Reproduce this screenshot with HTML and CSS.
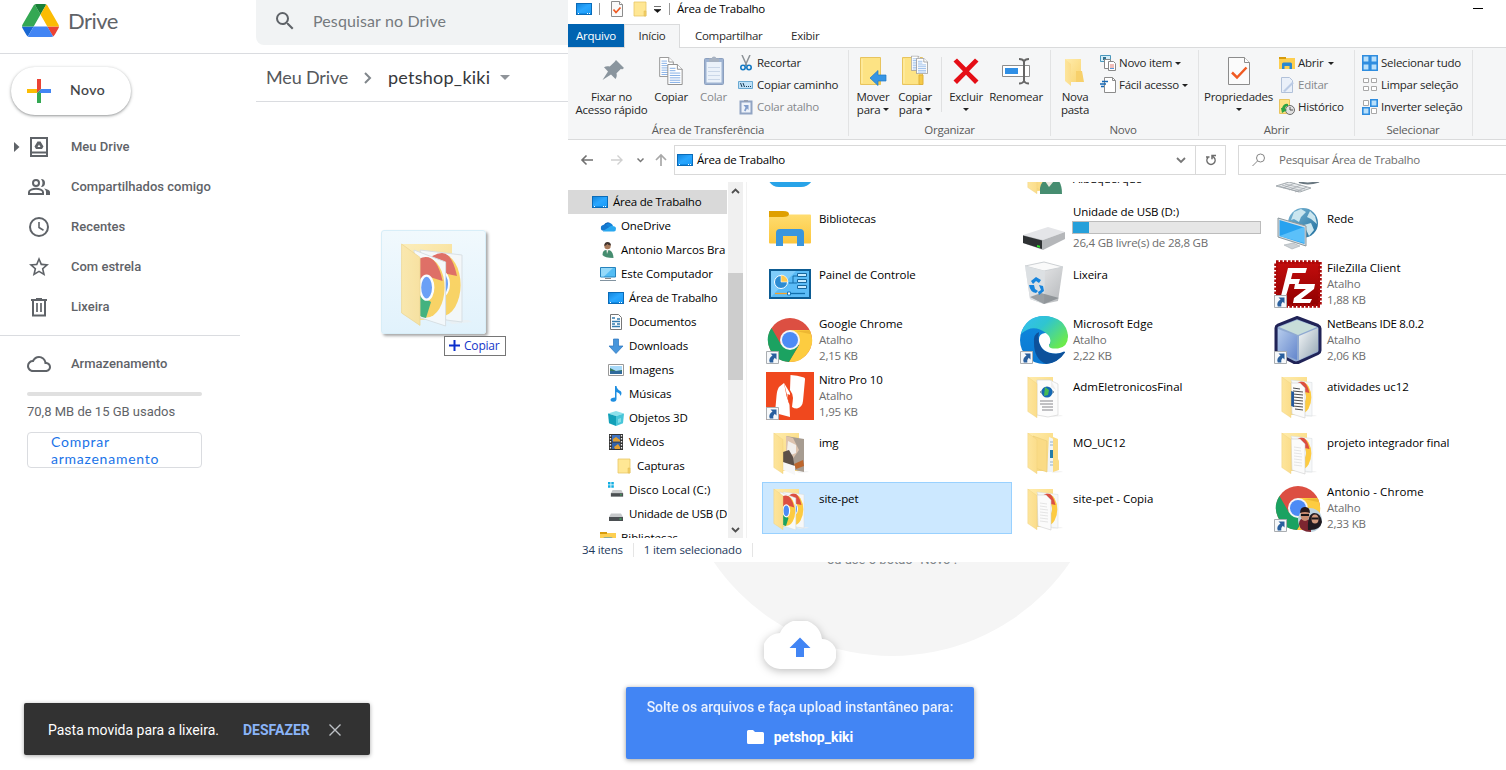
FILE: index.html
```html
<!DOCTYPE html>
<html lang="pt-BR">
<head>
<meta charset="utf-8">
<title>petshop_kiki - Drive</title>
<link rel="stylesheet" href="styles.css">
</head>
<body>
<svg class="defs" width="0" height="0" aria-hidden="true">
<defs>
<linearGradient id="gFold" x1="0" y1="0" x2="1" y2="1"><stop offset="0" stop-color="#ffecac"/><stop offset="1" stop-color="#f9d573"/></linearGradient>
<linearGradient id="gFlap" x1="0" y1="0" x2="1" y2="0"><stop offset="0" stop-color="#fde59c"/><stop offset="1" stop-color="#fbdd8b"/></linearGradient>
<linearGradient id="gSky" x1="0" y1="0" x2="1" y2="1"><stop offset="0" stop-color="#1486dd"/><stop offset=".5" stop-color="#2aa7ff"/><stop offset="1" stop-color="#1b9cf8"/></linearGradient>
<linearGradient id="gLib" x1="0" y1="0" x2="0" y2="1"><stop offset="0" stop-color="#ffdf75"/><stop offset="1" stop-color="#fcc63d"/></linearGradient>
<linearGradient id="gGray" x1="0" y1="0" x2="1" y2="1"><stop offset="0" stop-color="#f4f4f5"/><stop offset="1" stop-color="#b4b7ba"/></linearGradient>
<linearGradient id="gEdgeTop" x1="0" y1="0" x2="1" y2=".7"><stop offset="0" stop-color="#35bdf5"/><stop offset=".45" stop-color="#2fc5d0"/><stop offset="1" stop-color="#6bea4c"/></linearGradient>
<linearGradient id="gEdge" x1="0" y1="0" x2="0" y2="1"><stop offset="0" stop-color="#1089dd"/><stop offset="1" stop-color="#0a78d2"/></linearGradient>
<linearGradient id="gGlobe" x1="0" y1="0" x2="1" y2="1"><stop offset="0" stop-color="#7db8d6"/><stop offset="1" stop-color="#1f6f9e"/></linearGradient>
<linearGradient id="gCubeL" x1="0" y1="0" x2="1" y2="1"><stop offset="0" stop-color="#b6ccec"/><stop offset="1" stop-color="#6486cc"/></linearGradient>
<linearGradient id="gCubeR" x1="0" y1="0" x2="1" y2="1"><stop offset="0" stop-color="#f4f7f8"/><stop offset="1" stop-color="#93a5b3"/></linearGradient>
<linearGradient id="gZilla" x1="0" y1="0" x2="0" y2="1"><stop offset="0" stop-color="#c30d0d"/><stop offset="1" stop-color="#8f0000"/></linearGradient>

<symbol id="desktop" viewBox="0 0 16 12"><rect width="16" height="12" fill="#0a6bb8"/><rect x="1" y="1" width="14" height="9" fill="url(#gSky)"/><path d="M1 10h14v1H1z" fill="#128ce6"/><path d="M2 10h1v1H2zM11 10h1v1h-1zM13 10h1v1h-1z" fill="#fff"/></symbol>
<symbol id="folder16" viewBox="0 0 16 16"><path d="M2 1h12v14H2z" fill="#ffe794" stroke="#e9c867" stroke-width=".8"/><path d="M12 10h2v5h-2z" fill="#f5cf66" stroke="#dfb955" stroke-width=".5"/></symbol>
<symbol id="check16" viewBox="0 0 16 16"><path d="M2.500.5h8l3 3v12h-11z" fill="#fafafa" stroke="#8c8c8c"/><path d="M10.500.5v3h3" fill="#fff" stroke="#8c8c8c"/><path d="M4.500 8.500l2.500 3 4.500-5" fill="none" stroke="#ee5a24" stroke-width="1.800"/></symbol>
<symbol id="pin" viewBox="0 0 32 32"><path d="M20 5l8 8-2 1.500-1-.7-4.500 4.500c.6 2.500.1 4.300-1 5.700L15 19.500 6.500 25l5.500-8.500L8 12.200c1.600-1 3.500-1.300 5.700-.7L18.500 7z" fill="#8a959e"/></symbol>
<symbol id="page" viewBox="0 0 16 22"><path d="M.5.5h10l5 5v16H.5z" fill="#fff" stroke="#8d8d8d"/><path d="M10.500.5v5h5" fill="#fff" stroke="#8d8d8d"/><path d="M2.500 4.500h6M2.500 7h6M2.500 9.500h11M2.500 12h11M2.500 14.500h11M2.500 17h11M2.500 19.300h11" stroke="#6fa2e2" stroke-width=".9"/></symbol>
<symbol id="copy" viewBox="0 0 32 32"><use href="#page" x="4" y="2" width="15" height="20"/><use href="#page" x="12" y="9" width="16" height="21"/></symbol>
<symbol id="paste" viewBox="0 0 32 32"><rect x="6.500" y="3.500" width="19" height="26" rx="1" fill="#8fa8cc" stroke="#7991b5"/><path d="M8.500 7h15v20.500h-15z" fill="#eaf2fb"/><path d="M10 12.500h12M10 16.500h12M10 20.500h12M10 24.500h12" stroke="#c3d2e6"/><path d="M11 7V3.500h2.500a2.600 2.600 0 0 1 5 0H21V7z" fill="#9aa7b8"/></symbol>
<symbol id="cut" viewBox="0 0 16 16"><path d="M4 0l5 11M12 0L7 11" stroke="#8c9297" stroke-width="1.500"/><circle cx="5" cy="12.500" r="2.200" fill="none" stroke="#1479c4" stroke-width="1.600"/><circle cx="11" cy="12.500" r="2.200" fill="none" stroke="#1479c4" stroke-width="1.600"/></symbol>
<symbol id="path" viewBox="0 0 16 16"><path d="M.5 4.500h14v7H.5z" fill="#bfe1f7" stroke="#69a9d2"/><path d="M2.500 6l1.500 4M5 6l1.500 4M8 9.500h1M10 9.500h1M12 9.500h1" stroke="#173b57"/></symbol>
<symbol id="pastelink" viewBox="0 0 16 16"><path d="M2.500 2.500h11v12h-11z" fill="#edf3fb" stroke="#8096bb" stroke-width="2"/><path d="M6 1h4v2H6z" fill="#8793a8"/><path d="M5.500 6h5v5L9 9.500l-1.500 3-1.500-1 1.500-3z" fill="#6f8fc5"/></symbol>
<symbol id="moveto" viewBox="0 0 32 32"><path d="M3.500 2.500h20v27h-20z" fill="#fde384" stroke="#e8c45e"/><path d="M5 4v24" stroke="#fff0b0"/><path d="M20 22h3.500v7.500H20z" fill="#f5c948"/><path d="M13 23l8-7.500V20h8v6h-8v4.500z" fill="#3795e4" stroke="#2178c4" stroke-width=".7"/></symbol>
<symbol id="copyto" viewBox="0 0 32 32"><path d="M3.500 2.500h20v27h-20z" fill="#fde384" stroke="#e8c45e"/><path d="M5 4v24" stroke="#fff0b0"/><path d="M20 20h4v9.500h-4z" fill="#f5c948" stroke="#dfb13b"/><use href="#page" x="12" y=".5" width="11" height="15.500"/><use href="#page" x="17" y="3" width="12" height="16"/></symbol>
<symbol id="delete" viewBox="0 0 32 32"><path d="M3.500 6.500L7 3.500l9 9 9-9 3.500 3-9.500 9.700 9.500 9.300-3.500 3.500-9-9.200L7 29l-3.500-3.500 9.500-9.300z" fill="#e50e16"/></symbol>
<symbol id="rename" viewBox="0 0 32 32"><path d="M2.500 10.500h27v11h-27z" fill="#fff" stroke="#8d8d8d"/><path d="M5 13h13v6H5z" fill="#2f8fe5"/><path d="M19 4q4 0 5 2.500Q25 4 29 4M24 6v20M19 28.500q4 0 5-2.500 1 2.500 5 2.500" fill="none" stroke="#666" stroke-width="2"/></symbol>
<symbol id="newfolder" viewBox="0 0 32 32"><path d="M6 4h16v23H11z" fill="url(#gFold)"/><path d="M17 16h6l2 11h-8z" fill="#f7d06b"/><path d="M6 4l6 5v22l-6-5z" fill="url(#gFlap)"/></symbol>
<symbol id="newitem" viewBox="0 0 16 16"><path d="M.5.5h10v6H.5z" fill="#d4eef8" stroke="#4897bd"/><path d="M3 2h3v3H3z" fill="#31718f"/><path d="M4.500 4.500h6v9h-6z" fill="#fff" stroke="#888"/><path d="M8.500 6.500h5l2 2v7h-7z" fill="#fff" stroke="#888"/><path d="M10 10h4M10 12h4" stroke="#e27c73"/><path d="M10 13.500h4" stroke="#5796dc"/></symbol>
<symbol id="easy" viewBox="0 0 16 16"><path d="M4.500.5h8l3 3v12h-11z" fill="#fff" stroke="#8c8c8c"/><path d="M12.500.5v3h3" fill="none" stroke="#8c8c8c"/><path d="M2 4.500h6M0 7h6M1 9.500h3" stroke="#1568b5" stroke-width="1.300"/></symbol>
<symbol id="props" viewBox="0 0 32 32"><path d="M5.500 2.500h16l5 5v22h-21z" fill="#fbfbfb" stroke="#8c8c8c"/><path d="M21.500 2.500v5h5" fill="#fff" stroke="#8c8c8c"/><path d="M9 17.500l5 5 9.500-10" fill="none" stroke="#f05a22" stroke-width="2.500"/></symbol>
<symbol id="library" viewBox="0 0 48 48"><path d="M3 7.500h17l3 3h21a1 1 0 0 1 1 1v27a1 1 0 0 1-1 1H4a1 1 0 0 1-1-1z" fill="url(#gLib)"/><path d="M3 7h14q6 0 6 3t-6 3H3z" fill="#dfa000"/><path d="M10 42V29q0-4 4-4h20q4 0 4 4v13h-7V32H17v10z" fill="#3a96dd"/></symbol>
<symbol id="lib16" viewBox="0 0 16 16"><path d="M0 3h16v11H0z" fill="#fdcf51"/><path d="M0 2h7v2H0z" fill="#d79b0b"/><path d="M3 14V9q0-1.500 1.500-1.500h7Q13 7.500 13 9v5h-2.500v-3h-5v3z" fill="#2987d1"/></symbol>
<symbol id="edit" viewBox="0 0 16 16"><path d="M2.500.5h8l3 3v12h-11z" fill="#e9f0fa" stroke="#a6b8d4"/><path d="M4 14l9-9 2 1-9 9z" fill="#b2c4e3"/></symbol>
<symbol id="history" viewBox="0 0 16 16"><path d="M.5.5h10v14H.5z" fill="#fde384" stroke="#e8c45e"/><circle cx="11" cy="11" r="4.500" fill="#e1e1e1" stroke="#6c6c6c"/><path d="M11 8v3h3" stroke="#555" fill="none"/><path d="M3 9q2-5 6-4v2q-3 0-3 3l2 1-5 3-1-5z" fill="#2da344"/></symbol>
<symbol id="selall" viewBox="0 0 16 16"><path d="M.8.800h6.400v6.400H.8zM8.800.800h6.400v6.400H8.800zM.8 8.800h6.400v6.400H.8zM8.800 8.800h6.400v6.400H8.800z" fill="#b9e0fb" stroke="#2f8ddf" stroke-width="1.600"/></symbol>
<symbol id="selnone" viewBox="0 0 16 16"><path d="M1.500 1.500h5v4h-5zM9.500 1.500h5v4h-5zM1.500 9.500h5v4h-5zM9.500 9.500h5v4h-5z" fill="#fff" stroke="#a8a8a8"/></symbol>
<symbol id="selinv" viewBox="0 0 16 16"><path d="M1.500 1.500h5v5h-5zM9.500 9.500h5v5h-5z" fill="#fff" stroke="#a8a8a8"/><path d="M8.800.800h6.400v6.400H8.800zM.8 8.800h6.400v6.400H.8z" fill="#b9e0fb" stroke="#2f8ddf" stroke-width="1.600"/></symbol>

<symbol id="onedrive" viewBox="0 0 16 16"><path d="M4 7a4 4 0 0 1 7-1l-3 4-7-1z" fill="#0d5fb5"/><path d="M11 5.500a4 4 0 0 1 2 2.500L8 10 5 7q2-2.500 6-1.500z" fill="#1584da"/><path d="M3 7q2-1 4 .5l5 4-9 1.300A3 3 0 0 1 3 7z" fill="#1478cf"/><path d="M3 13l8-5q5-.5 5 2.800T13 13.400H3z" fill="#29a8f0"/></symbol>
<symbol id="person" viewBox="0 0 16 16"><circle cx="7.500" cy="4" r="3.200" fill="#a97b5c"/><path d="M4.300 4q0-4 3.200-4 3.500 0 3.400 3.500-3-.5-3.500-1.500-1 1.500-3.100 2z" fill="#423630"/><path d="M2.500 13q0-5 4-5h2q4.500.5 5 8-9 0-11-3z" fill="#468d70"/><path d="M6.500 8h2L7 12z" fill="#f1efea"/></symbol>
<symbol id="pc" viewBox="0 0 16 16"><path d="M.5 1.500h15v9.500H.5z" fill="#53bdf4" stroke="#2783bd"/><path d="M1 2h12L4 10.500H1z" fill="#95d9f9"/><path d="M5 12h6v1H5z" fill="#888"/><path d="M0 14h16v1H0z" fill="#8293a0"/></symbol>
<symbol id="doc" viewBox="0 0 16 16"><path d="M2.500.5h8l3 3v12h-11z" fill="#fff" stroke="#777"/><path d="M4 4h3M9 5h3M4 7.500h8M4 10h3M4 12.500h8M9 10h3" stroke="#337cae" stroke-width="1.300"/></symbol>
<symbol id="down" viewBox="0 0 16 16"><path d="M5.500 1h5v7H15l-7 7.500L1 8h4.500z" fill="#4796dc" stroke="#2874bd" stroke-width=".7"/></symbol>
<symbol id="pic" viewBox="0 0 16 16"><path d="M.5 2.500h15v11H.5z" fill="#fff" stroke="#999"/><path d="M2 4h12v8H2z" fill="#a8dafa"/><path d="M2 6l6 3 6-1v1H2z" fill="#35785d"/><path d="M2 9h12v3H2z" fill="#2f6a9c"/></symbol>
<symbol id="music" viewBox="0 0 16 16"><path d="M7 0h1.500q.5 3.500 4 5 2 2 0 5-.3-3-4-4v7q0 2.500-3 2.800Q2.500 16 2.500 14q0-2.600 4.500-2.600z" fill="#1f8ee0"/></symbol>
<symbol id="cube" viewBox="0 0 16 16"><path d="M0 3.500L8 1l8 2.500L8 6z" fill="#8ce1eb"/><path d="M0 3.500L8 6v10l-7-2.800z" fill="#12a0b8"/><path d="M8 6l8-2.500-1 9.700L8 16z" fill="#48c6d9"/><path d="M10 9l3-1v4l-3 1z" fill="#80dce7"/></symbol>
<symbol id="video" viewBox="0 0 16 16"><path d="M1 0h14v16H1z" fill="#333"/><path d="M4 1h8v6.500H4z" fill="#3f74c2"/><path d="M4 8.500h8V15H4z" fill="#3262a8"/><path d="M5 5l3-2 4 3v1.500H5zM6 13l4-3 2 3v2H7z" fill="#e2a031"/><path d="M2.500 1v14M13.500 1v14" stroke="#eee" stroke-width="1.300" stroke-dasharray="1.500 1.500"/></symbol>
<symbol id="drive16" viewBox="0 0 16 16"><path d="M3 7.500h10l2 3.500H1z" fill="#c7c9cb"/><path d="M1 11h14v4H1z" fill="#4b4f52"/><path d="M11.500 12.500h2v1h-2z" fill="#3ddd67"/></symbol>
<symbol id="diskc" viewBox="0 0 16 16"><use href="#drive16" x="2" y="1" width="14" height="15"/><path d="M0 0h2.500v2.500H0zM3.300 0h2.500v2.500H3.300zM0 3.300h2.500v2.500H0zM3.300 3.300h2.500v2.500H3.300z" fill="#12aee2"/></symbol>

<symbol id="chrome" viewBox="0 0 48 48"><circle cx="24" cy="24" r="22" fill="#dc4f42"/><path d="M24 14h19.600A22 22 0 0 1 22.900 46L33 29z" fill="#fdcc40"/><path d="M5.500 12L15.300 29 33 29 22.900 46A22 22 0 0 1 5.500 12z" fill="#1ba261"/><path d="M30 15l13.500-.8 1.500 4z" fill="#e5ae2c" opacity=".7"/><circle cx="24" cy="24" r="10" fill="#f4f5f7"/><circle cx="24" cy="24" r="8" fill="#4c8bf5"/></symbol>
<symbol id="shortcut" viewBox="0 0 13 13"><path d="M.5.5h12v12H.5z" fill="#f6f8fa" stroke="#a9adb1"/><path d="M4.500 2.500h6V8.500L8.700 6.700Q6.800 8.500 7.300 11.500H3.800Q2 7.500 6.500 4.500z" fill="#295f9e"/></symbol>
<symbol id="panel" viewBox="0 0 48 48"><path d="M3 9h42v30H3z" fill="#0d5c93"/><path d="M5 11h38v26H5z" fill="#7fcdfb"/><path d="M5 37L30 11h13v26z" fill="#5bbcf7"/><circle cx="15" cy="22" r="6.500" fill="#2c8bd2" stroke="#fff"/><path d="M15 15a7 7 0 0 1 7 7h-7z" fill="#ffc94d" stroke="#fff" stroke-width=".6"/><path d="M23 23h4v-7h4M27 23h4" fill="none" stroke="#146ca8"/><path d="M31.500 13.500h9v3h-9zM31.500 19.500h9v3h-9zM31.500 25.500h9v3h-9z" fill="#c6ebff" stroke="#16679e"/><path d="M9 33.500h14" stroke="#f5a229" stroke-width="1.300"/><path d="M23 33.500h16" stroke="#126fac" stroke-width="1.300"/><path d="M21.500 32h3v3h-3z" fill="#fff" stroke="#1878b8"/></symbol>
<symbol id="nitro" viewBox="0 0 48 48"><path d="M0 0h48v48H0z" fill="#f0481e"/><path d="M18 11l-5 4q-2 3-2.500 9L9 41l15 4-.5-12-3-9zM24.500 3Q31 3 38 5.500q1.300.5 1 2L37 29q-.5 6-6 7.500-3 0-5-1.500l1-9q0-4-3-8z" fill="#fff"/><path d="M18 11l6 10-.5 12" fill="#fff"/><path d="M21.500 22l2.500 1q2.500 3 2 8l-1 3q-3.500-3-3.500-12z" fill="#f0481e"/></symbol>
<symbol id="usb" viewBox="0 0 48 48"><path d="M3 31l25-8 17 5-22 8z" fill="#e4e5e8"/><path d="M3 31l20 5 22-8v7L23 46 3 39z" fill="#b5b7ba"/><path d="M3 31.500l19 5v8.500L3 39z" fill="#2e3133"/><path d="M17 41l3 .7v2l-3-.7z" fill="#2ce02a"/></symbol>
<symbol id="bin" viewBox="0 0 48 48"><path d="M5 6l18-4 20 5-5 34-14 3-14-5z" fill="url(#gGray)"/><path d="M5 6l19 5 19-4-19-5z" fill="#fafafa" stroke="#ced2d5"/><path d="M5 6l20 5-1 33-14-5z" fill="#dce0e3"/><path d="M10 37l11-4 18 5-15 6z" fill="#777d81" opacity=".65"/><path d="M11 21l5-4 5 3-2 3-3-2-3 3zM9 25l5 0 1 4 3 2-2 2q-6-1-7-8zM19 25l4 1 1 5-5 4-1-3 3-2z" fill="#1684dc"/></symbol>
<symbol id="edge" viewBox="0 0 48 48"><circle cx="24" cy="24" r="24" fill="url(#gEdge)"/><path d="M14 27Q13 18 19 16q-1 5 0 9 3 13 17 12.500 4 0 8-2 1.500 0 1 1Q38 47 26 48q-12-5-12-21z" fill="#0d519b"/><path d="M25 17q-7 1-6 8.500 3 12 17 12 4 0 8-2 1.500 0 1 1L49 40V20l-3 3q-3 7-10 8-7 0-7-2 4-6 1-11z" fill="#fff"/><path d="M1 18Q6 0 24 0q22 1 24 20 0 11-10 12.500-9 .5-9-2.500 0-1 1-2 2-6-4-11Q13 7 1 18z" fill="url(#gEdgeTop)"/></symbol>
<symbol id="network" viewBox="0 0 48 48"><g transform="translate(0 3)"><circle cx="29" cy="16" r="15" fill="url(#gGlobe)"/><path d="M20 5l7-3 5 3-5 5-2 5-5-3-3 1zM36 4l5 5 2 8-6-5-4-2zM30 18l7-2 3 7-5 6z" fill="#cbe6ef"/><path d="M4 11l28 8v20L4 30z" fill="#d9dee2" stroke="#8b989e"/><path d="M5.500 13l25 7.500V37l-25-8z" fill="#28a2ef"/><path d="M5.500 29L30 20v16z" fill="#5bc0fa"/><path d="M10 38l9-2 7 3-8 3z" fill="#ccd1d5" stroke="#a5adb2" stroke-width=".6"/></g></symbol>
<symbol id="filezilla" viewBox="0 0 48 48"><path d="M2 2h44v44H2z" fill="url(#gZilla)" stroke="#ab0808" stroke-width="3.500" stroke-dasharray="2.600 1.400"/><path d="M14 8h19l-1.500 5H18.500l-1.500 6h9l-1.500 5h-9L12 36H7zM21 24h20l-1 5-13 10h11l-2 4H19l1-5 12-9H20z" fill="#fff"/></symbol>
<symbol id="netbeans" viewBox="0 0 48 48"><path d="M23 1.500l21 8q2 1 2 3v22q0 2-2 3l-20 9q-2 .8-4 0L3.500 38Q2 37 2 35V12q0-2 2-3z" fill="#8fa9d1" stroke="#202357" stroke-width="3"/><path d="M5 11l18-7 20 7-19 8z" fill="#c7ddd9"/><path d="M4 13l19 7v24L4 36z" fill="url(#gCubeL)"/><path d="M25 20l19-8v23l-19 9z" fill="url(#gCubeR)"/></symbol>
<symbol id="fback" viewBox="0 0 48 48"><path d="M8 5h25v38H14z" fill="url(#gFold)"/><path d="M30 43l11 0 2 1-10 1z" fill="#eee" opacity=".7"/></symbol>
<symbol id="fflap" viewBox="0 0 48 48"><path d="M7.800 5L17 11.700v34L7.800 39.500z" fill="url(#gFlap)" stroke="#edcf7c" stroke-width=".4"/></symbol>
<clipPath id="clipS2"><path d="M17 8l21 2.500V44l-8-1z"/></clipPath>
<clipPath id="clipS1"><path d="M16.500 9l13.300 5v32L16.500 41.800z"/></clipPath>
<symbol id="disc2" viewBox="0 0 48 48"><path d="M17 8l21 2.500V44l-8-1z" fill="#f6f8f9" stroke="#d4dadd" stroke-width=".5"/><g clip-path="url(#clipS2)"><ellipse cx="28" cy="25.500" rx="9.300" ry="15.500" fill="#fdcb41"/><path d="M20 14q4-4.500 8-4.500 5 0 7.500 11.500L26 19z" fill="#dc4f42"/><ellipse cx="28" cy="25" rx="3.500" ry="6" fill="#4c8bf5" stroke="#fff"/></g></symbol>
<symbol id="f-chrome" viewBox="0 0 48 48"><use href="#fback"/><use href="#disc2"/><path d="M14 8l15.800 6v32L16 41.500z" fill="#f8fafb" stroke="#d4dadd" stroke-width=".5"/><g clip-path="url(#clipS1)"><ellipse cx="20.300" cy="26.800" rx="9" ry="15" fill="#fdcb41"/><path d="M16 12.600Q25 8 28.300 23.500l-8-2.500-4.300 2z" fill="#dc4f42"/><path d="M16 30l6.500 4-2.500 8q-3-.5-4-2z" fill="#1ba261"/><ellipse cx="20.300" cy="26.800" rx="3.300" ry="6" fill="#4c8bf5" stroke="#fff" stroke-width="1.200"/></g><use href="#fflap"/></symbol>
<symbol id="f-img" viewBox="0 0 48 48"><use href="#fback"/><path d="M20 8l18 3v33l-9-2z" fill="#a79c91"/><path d="M20 8l7 2 6 12-7 10-6-3z" fill="#ddc3ae"/><path d="M22 13l8 4v8l-5 2-4-5z" fill="#f2efec"/><path d="M17 24l6-2 4 7 2 13-6-3-6-4z" fill="#5c5048"/><path d="M28 36l9-4 1 6-8 3z" fill="#bd662d"/><path d="M17 34l12 4v9l-12-5z" fill="#f7f7f7"/><use href="#fflap"/></symbol>
<symbol id="f-web" viewBox="0 0 48 48"><use href="#fback"/><path d="M17 8h13l8 4v31l-10 2-11-2z" fill="#fcfcfc" stroke="#d6d6d6" stroke-width=".7"/><path d="M31 8v7l5 3z" fill="#eee"/><path d="M20 20q7-6 14 0-7 6-14 0z" fill="none" stroke="#7d8f99"/><circle cx="27" cy="20" r="5.500" fill="#1468b4"/><path d="M25 15l4 3-1 5-4 1z" fill="#47ba54"/><path d="M20 29h13M20 32h13M22 35h11M22 38h11" stroke="#86868b"/><use href="#fflap"/></symbol>
<symbol id="f-sub" viewBox="0 0 48 48"><use href="#fback"/><path d="M29 9l7 3v32h-9z" fill="#f0f4f7"/><path d="M30 14h4M30 17h4M30 34h4M30 37h4" stroke="#92b0c7"/><path d="M30 22h4v8h-4z" fill="#257ca7"/><path d="M33 9l5 2v20l1 2v9l-6 2z" fill="#fbdc83"/><path d="M13 8l14 5v31l-12-4z" fill="#fadb86" stroke="#e9cb76" stroke-width=".6"/><use href="#fflap"/></symbol>
<symbol id="f-page" viewBox="0 0 48 48"><use href="#fback"/><use href="#disc2"/><path d="M17 11l9 0 5 5v30l-13-4z" fill="#fbfbfb" stroke="#cfcfcf" stroke-width=".6"/><path d="M20 19l7 1M20 22l7 1M20 25l8 1M20 28l8 1M20 31l8 1M20 34l8 1M20 37l8 1" stroke="#dedede" stroke-width=".8"/><use href="#fflap"/></symbol>
<symbol id="f-text" viewBox="0 0 48 48"><use href="#fback"/><use href="#disc2"/><path d="M17 11l9 0 5 5v30l-13-4z" fill="#fbfbfb" stroke="#cfcfcf" stroke-width=".6"/><path d="M19 16l7 1M19 19l10 1M19 22l10 1M19 25l10 1M19 28l10 1M19 31l10 1M19 34l10 1M21 37l8 1" stroke="#4b4b4b"/><path d="M17 19l3 1v15l-3-1z" fill="#23599f"/><use href="#fflap"/></symbol>
</defs>
</svg>

<div class="screen">
  <header class="drive-head">
    <div class="brand">
      <svg width="37" height="33" viewBox="0 0 87.300 78"><path d="M6.600 66.850l3.850 6.650c.8 1.400 1.950 2.500 3.300 3.300L27.500 53H0c0 1.550.4 3.100 1.200 4.500z" fill="#1967d2"/><path d="M43.650 25L29.900 1.200c-1.350.8-2.500 1.900-3.300 3.300L1.200 48.500C.4 49.900 0 51.450 0 53h27.500z" fill="#34a853"/><path d="M73.550 76.800c1.350-.8 2.500-1.900 3.300-3.300l1.600-2.750L86.100 57.500c.8-1.400 1.200-2.950 1.200-4.500H59.800l5.850 11.500z" fill="#ea4335"/><path d="M43.650 25L57.400 1.200C56.050.4 54.500 0 52.900 0H34.400c-1.600 0-3.150.45-4.500 1.200z" fill="#188038"/><path d="M59.800 53H27.500L13.750 76.800c1.350.8 2.900 1.200 4.500 1.200h50.800c1.600 0 3.150-.45 4.500-1.200z" fill="#4285f4"/><path d="M73.400 26.500L60.700 4.500c-.8-1.400-1.950-2.500-3.300-3.300L43.650 25 59.800 53h27.450c0-1.550-.4-3.100-1.200-4.500z" fill="#fbbc04"/></svg>
      <span>Drive</span>
    </div>
    <div class="drive-search">
      <svg width="24" height="24" viewBox="0 0 24 24"><path fill="#5f6368" d="M15.500 14h-.79l-.28-.27A6.470 6.470 0 0 0 16 9.500 6.500 6.500 0 1 0 9.500 16c1.610 0 3.090-.59 4.230-1.570l.27.280v.79l5 4.990L20.490 19l-4.990-5zm-6 0C7.010 14 5 11.990 5 9.500S7.010 5 9.500 5 14 7.010 14 9.500 11.990 14 9.500 14z"/></svg>
      <span>Pesquisar no Drive</span>
    </div>
  </header>

  <div class="drive-body">
    <aside class="side">
      <button class="new"><svg width="24" height="24" viewBox="0 0 24 24"><path d="M10 0h4v10l-4 4z" fill="#ea4335"/><path d="M0 10h10v4H0z" fill="#fbbc04"/><path d="M10 14l4-4v14h-4z" fill="#34a853"/><path d="M14 10h10v4H12z" fill="#4285f4"/></svg><span>Novo</span></button>
      <nav>
        <a class="row"><svg class="caret" width="6" height="10" viewBox="0 0 6 10"><path d="M0 0l5.500 5L0 10z" fill="#5f6368"/></svg><svg width="24" height="24" viewBox="0 0 24 24"><path d="M4 3h16v18H4zM4 17.500h16" fill="none" stroke="#5f6368" stroke-width="2"/><path d="M10.500 6.500h3l3 5-1.500 2.500H9L7.500 11.500zM12 9.500l-1.500 2.500h3z" fill="#5f6368" fill-rule="evenodd"/></svg><span>Meu Drive</span></a>
        <a class="row"><svg width="24" height="24" viewBox="0 0 24 24"><circle cx="9" cy="8" r="3" fill="none" stroke="#5f6368" stroke-width="2"/><path d="M2 19v-2c0-2 4-3.300 7-3.300s7 1.300 7 3.300v2z" fill="none" stroke="#5f6368" stroke-width="2"/><path d="M14 4a4 4 0 0 1 0 8q3-4 0-8zM17 13.500c3 .6 6 1.800 6 3.500v3h-4v-3c0-1.500-.8-2.600-2-3.500z" fill="#5f6368"/></svg><span>Compartilhados comigo</span></a>
        <a class="row"><svg width="24" height="24" viewBox="0 0 24 24"><circle cx="12" cy="12" r="9" fill="none" stroke="#5f6368" stroke-width="2"/><path d="M12 7v5.500l4.500 2.700" fill="none" stroke="#5f6368" stroke-width="1.600"/></svg><span>Recentes</span></a>
        <a class="row"><svg width="24" height="24" viewBox="0 0 24 24"><path d="M22 9.240l-7.190-.62L12 2 9.190 8.630 2 9.240l5.460 4.730L5.820 21 12 17.270 18.180 21l-1.630-7.030L22 9.240zM12 15.400l-3.760 2.270 1-4.280-3.320-2.880 4.380-.38L12 6.100l1.710 4.040 4.380.38-3.320 2.880 1 4.280L12 15.400z" fill="#5f6368"/></svg><span>Com estrela</span></a>
        <a class="row"><svg width="24" height="24" viewBox="0 0 24 24"><path d="M4 5h16M9 4h6M6 5v15.500h12V5" fill="none" stroke="#5f6368" stroke-width="2"/><path d="M10 8v9M14 8v9" stroke="#5f6368" stroke-width="1.700"/></svg><span>Lixeira</span></a>
      </nav>
      <div class="rule"></div>
      <a class="row store"><svg width="24" height="24" viewBox="0 0 24 24"><path d="M19.350 10.040A7.490 7.490 0 0 0 12 4C9.110 4 6.600 5.640 5.350 8.040A5.994 5.994 0 0 0 0 14c0 3.310 2.690 6 6 6h13c2.760 0 5-2.240 5-5 0-2.640-2.050-4.780-4.650-4.960zM19 18H6c-2.210 0-4-1.790-4-4s1.790-4 4-4h.71C7.370 7.690 9.480 6 12 6c3.040 0 5.500 2.460 5.500 5.500v.5H19c1.660 0 3 1.340 3 3s-1.340 3-3 3z" fill="#5f6368"/></svg><span>Armazenamento</span></a>
      <div class="meter"></div>
      <div class="used">70,8 MB de 15 GB usados</div>
      <button class="buy">Comprar<br>armazenamento</button>
    </aside>
    <main class="main">
      <div class="crumbs"><span class="c1">Meu Drive</span><svg width="8" height="12" viewBox="0 0 8 12"><path d="M1 1l5 5-5 5" fill="none" stroke="#80868b" stroke-width="2"/></svg><span class="c2">petshop_kiki</span><svg width="10" height="5" viewBox="0 0 10 5"><path d="M0 0h10L5 5z" fill="#8f9499"/></svg></div>
    </main>
  </div>

  <div class="empty"><span>ou use o botão "Novo".</span></div>

  <svg class="cloud" width="72" height="48" viewBox="0 0 72 48"><path d="M16 12A22 22 0 0 1 58 18A15 15 0 0 1 57 48H17A18 18 0 0 1 16 12z" fill="#fff"/><path d="M36 16.500L46.500 27H40v9h-8v-9h-6.500z" fill="#4285f4"/></svg>
  <div class="upload"><p>Solte os arquivos e faça upload instantâneo para:</p><div class="dest"><svg width="17" height="14" viewBox="0 0 17 14"><path d="M1.500 0H6l2 2h7.500q1.500 0 1.500 1.500v9q0 1.500-1.500 1.500h-14Q0 14 0 12.500v-11Q0 0 1.500 0z" fill="#fff"/></svg><b>petshop_kiki</b></div></div>
  <div class="toast"><span>Pasta movida para a lixeira.</span><b>DESFAZER</b><svg width="12" height="12" viewBox="0 0 12 12"><path d="M.5.5l11 11M11.500.5l-11 11" stroke="#bdc1c6" stroke-width="1.400"/></svg></div>

  <div class="ghost"><svg width="96" height="96"><use href="#f-chrome"/></svg></div>
  <div class="tip"><svg width="11" height="11" viewBox="0 0 11 11"><path d="M5.500 0v11M0 5.500h11" stroke="#0a2fcb" stroke-width="2"/></svg>Copiar</div>

  <section class="win">
    <div class="title">
      <svg width="16" height="12"><use href="#desktop"/></svg><i class="bar b1"></i>
      <svg class="t2" width="16" height="16"><use href="#check16"/></svg>
      <svg class="t3" width="16" height="16"><use href="#folder16"/></svg>
      <svg class="t4" width="7" height="7" viewBox="0 0 7 7"><path d="M0 .5h7M0 3.500h7L3.500 6.500z" fill="#111" stroke="#111" stroke-width=".6"/></svg><i class="bar b2"></i>
      <span>Área de Trabalho</span><i class="min"></i>
    </div>
    <div class="tabs"><span class="file">Arquivo</span><span class="on">Início</span><span class="tb">Compartilhar</span><span class="tc">Exibir</span></div>
    <div class="ribbon">
      <div class="group g1"><div class="tools">
        <div class="big w76"><svg width="32" height="32"><use href="#pin"/></svg>Fixar no<br>Acesso rápido</div>
        <div class="big w44"><svg width="32" height="32"><use href="#copy"/></svg>Copiar</div>
        <div class="big w41 off"><svg width="32" height="32"><use href="#paste"/></svg>Colar</div>
        <div class="smalls"><div><svg width="16" height="16"><use href="#cut"/></svg>Recortar</div><div><svg width="16" height="16"><use href="#path"/></svg>Copiar caminho</div><div class="off"><svg width="16" height="16"><use href="#pastelink"/></svg>Colar atalho</div></div>
      </div><div class="cap">Área de Transferência</div></div>
      <div class="group g2"><div class="tools">
        <div class="big w42"><svg width="32" height="32"><use href="#moveto"/></svg>Mover<br>para <i class="dd"></i></div>
        <div class="big w42"><svg width="32" height="32"><use href="#copyto"/></svg>Copiar<br>para <i class="dd"></i></div>
        <i class="vsep"></i>
        <div class="big w42"><svg width="32" height="32"><use href="#delete"/></svg>Excluir<br><i class="dd"></i></div>
        <div class="big w58"><svg width="32" height="32"><use href="#rename"/></svg>Renomear</div>
      </div><div class="cap">Organizar</div></div>
      <div class="group g3"><div class="tools">
        <div class="big w40"><svg width="32" height="32"><use href="#newfolder"/></svg>Nova<br>pasta</div>
        <div class="smalls"><div><svg width="16" height="16"><use href="#newitem"/></svg>Novo item <i class="dd"></i></div><div><svg width="16" height="16"><use href="#easy"/></svg>Fácil acesso <i class="dd"></i></div></div>
      </div><div class="cap">Novo</div></div>
      <div class="group g4"><div class="tools">
        <div class="big w79"><svg width="32" height="32"><use href="#props"/></svg>Propriedades<br><i class="dd"></i></div>
        <div class="smalls"><div><svg width="16" height="16"><use href="#lib16"/></svg>Abrir <i class="dd"></i></div><div class="off"><svg width="16" height="16"><use href="#edit"/></svg>Editar</div><div><svg width="16" height="16"><use href="#history"/></svg>Histórico</div></div>
      </div><div class="cap">Abrir</div></div>
      <div class="group g5"><div class="tools">
        <div class="smalls"><div><svg width="16" height="16"><use href="#selall"/></svg>Selecionar tudo</div><div><svg width="16" height="16"><use href="#selnone"/></svg>Limpar seleção</div><div><svg width="16" height="16"><use href="#selinv"/></svg>Inverter seleção</div></div>
      </div><div class="cap">Selecionar</div></div>
    </div>
    <div class="addr">
      <svg class="nav" width="106" height="30" viewBox="0 0 106 30"><path d="M25 15H14M18.500 10.500L14 15l4.500 4.500" fill="none" stroke="#707070" stroke-width="1.600"/><path d="M43 15h11M49.500 10.500L54 15l-4.500 4.500" fill="none" stroke="#d0d0d0" stroke-width="1.400"/><path d="M69.500 13.500l3 3 3-3" fill="none" stroke="#777" stroke-width="1.500"/><path d="M93 21V10M88 15l5-5 5 5" fill="none" stroke="#a8a8a8" stroke-width="1.700"/></svg>
      <div class="box"><svg width="16" height="12"><use href="#desktop"/></svg><span>Área de Trabalho</span><svg class="chev" width="10" height="7" viewBox="0 0 10 7"><path d="M1 1l4 4 4-4" fill="none" stroke="#777" stroke-width="1.800"/></svg><div class="reload"><svg width="12" height="12" viewBox="0 0 12 12"><path d="M3 3.500A4.100 4.100 0 1 0 9 3.500L7 2M7 5.200V1.500h4M1 3h3.500" fill="none" stroke="#6d6d6d" stroke-width="1.500"/></svg></div></div>
      <div class="find"><svg width="14" height="14" viewBox="0 0 14 14"><circle cx="8.500" cy="5" r="4" fill="none" stroke="#858585"/><path d="M5.500 8l-5 5" stroke="#858585"/></svg><span>Pesquisar Área de Trabalho</span></div>
    </div>
    <div class="content">
      <div class="tree">
        <div class="n l0"><svg width="16" height="12"><use href="#desktop"/></svg>Área de Trabalho</div>
        <div class="n l1"><svg width="16" height="16"><use href="#onedrive"/></svg>OneDrive</div>
        <div class="n l1"><svg width="16" height="16"><use href="#person"/></svg>Antonio Marcos Bra</div>
        <div class="n l1"><svg width="16" height="16"><use href="#pc"/></svg>Este Computador</div>
        <div class="n l2"><svg width="16" height="12"><use href="#desktop"/></svg>Área de Trabalho</div>
        <div class="n l2"><svg width="16" height="16"><use href="#doc"/></svg>Documentos</div>
        <div class="n l2"><svg width="16" height="16"><use href="#down"/></svg>Downloads</div>
        <div class="n l2"><svg width="16" height="16"><use href="#pic"/></svg>Imagens</div>
        <div class="n l2"><svg width="16" height="16"><use href="#music"/></svg>Músicas</div>
        <div class="n l2"><svg width="16" height="16"><use href="#cube"/></svg>Objetos 3D</div>
        <div class="n l2"><svg width="16" height="16"><use href="#video"/></svg>Vídeos</div>
        <div class="n l3"><svg width="16" height="16"><use href="#folder16"/></svg>Capturas</div>
        <div class="n l2 wide"><svg width="16" height="16"><use href="#diskc"/></svg>Disco Local (C:)</div>
        <div class="n l2 snug"><svg width="16" height="16"><use href="#drive16"/></svg>Unidade de USB (D</div>
        <div class="n l1"><svg width="16" height="16"><use href="#lib16"/></svg>Bibliotecas</div>
      </div>
      <div class="scroll"><svg width="9" height="6" viewBox="0 0 9 6"><path d="M1 5l3.500-3.500L8 5" fill="none" stroke="#505050" stroke-width="1.800"/></svg><i></i><svg width="9" height="6" viewBox="0 0 9 6"><path d="M1 1l3.500 3.500L8 1" fill="none" stroke="#505050" stroke-width="1.800"/></svg></div>
      <div class="files">
        <div class="f one"><div class="ic"><svg width="48" height="48" viewBox="0 0 48 48"><path d="M13 39h22q8 0 12-8H2q3 8 11 8z" fill="#28a3e8"/></svg></div></div>
        <div class="f one two"><div class="ic"><svg width="48" height="48"><use href="#f-sub"/><path d="M20 46V40q2-10 12-10 10 0 10 16z" fill="#468d70"/><path d="M25 33l7-3 2 3-5 6z" fill="#eee9df"/></svg></div><div class="tx">Albuquerque</div></div>
        <div class="f one"><div class="ic"><svg width="48" height="48" viewBox="0 0 48 48"><path d="M2 38l13-4 22 6-11 4z" fill="#e8ebed" stroke="#a6adb1"/><path d="M5 38l20 6M8 37l20 6M11 36l20 5M9 40l12-5M15 42l12-5M21 44l12-5" stroke="#9da4a9" stroke-width=".7"/><path d="M25 34q9 3 20-.5" fill="none" stroke="#697780" stroke-width="2"/></svg></div></div>
        <div class="f one"><div class="ic"><svg width="48" height="48"><use href="#library"/></svg></div><div class="tx">Bibliotecas</div></div>
        <div class="f"><div class="ic"><svg width="48" height="48"><use href="#usb"/></svg></div><div class="tx">Unidade de USB (D:)<div class="cap-bar"><i></i></div><em>26,4 GB livre(s) de 28,8 GB</em></div></div>
        <div class="f one"><div class="ic"><svg width="48" height="48"><use href="#network"/></svg></div><div class="tx">Rede</div></div>
        <div class="f one"><div class="ic"><svg width="48" height="48"><use href="#panel"/></svg></div><div class="tx">Painel de Controle</div></div>
        <div class="f one"><div class="ic"><svg width="48" height="48"><use href="#bin"/></svg></div><div class="tx">Lixeira</div></div>
        <div class="f"><div class="ic"><svg width="48" height="48"><use href="#filezilla"/><use href="#shortcut" y="35" width="13" height="13"/></svg></div><div class="tx wide">FileZilla Client<em>Atalho</em><em>1,88 KB</em></div></div>
        <div class="f"><div class="ic"><svg width="48" height="48"><use href="#chrome"/><use href="#shortcut" y="35" width="13" height="13"/></svg></div><div class="tx wide">Google Chrome<em>Atalho</em><em>2,15 KB</em></div></div>
        <div class="f"><div class="ic"><svg width="48" height="48"><use href="#edge"/><use href="#shortcut" y="35" width="13" height="13"/></svg></div><div class="tx wide">Microsoft Edge<em>Atalho</em><em>2,22 KB</em></div></div>
        <div class="f"><div class="ic"><svg width="48" height="48"><use href="#netbeans"/><use href="#shortcut" y="35" width="13" height="13"/></svg></div><div class="tx tight">NetBeans IDE 8.0.2<em>Atalho</em><em>2,06 KB</em></div></div>
        <div class="f"><div class="ic"><svg width="48" height="48"><use href="#nitro"/><use href="#shortcut" y="35" width="13" height="13"/></svg></div><div class="tx">Nitro Pro 10<em>Atalho</em><em>1,95 KB</em></div></div>
        <div class="f one"><div class="ic"><svg width="48" height="48"><use href="#f-web"/></svg></div><div class="tx wide">AdmEletronicosFinal</div></div>
        <div class="f one"><div class="ic"><svg width="48" height="48"><use href="#f-text"/></svg></div><div class="tx">atividades uc12</div></div>
        <div class="f one"><div class="ic"><svg width="48" height="48"><use href="#f-img"/></svg></div><div class="tx">img</div></div>
        <div class="f one"><div class="ic"><svg width="48" height="48"><use href="#f-sub"/></svg></div><div class="tx">MO_UC12</div></div>
        <div class="f one"><div class="ic"><svg width="48" height="48"><use href="#f-page"/></svg></div><div class="tx">projeto integrador final</div></div>
        <div class="f one sel"><div class="ic"><svg width="48" height="48"><use href="#f-chrome"/></svg></div><div class="tx">site-pet</div></div>
        <div class="f one"><div class="ic"><svg width="48" height="48"><use href="#f-page"/></svg></div><div class="tx wide">site-pet - Copia</div></div>
        <div class="f"><div class="ic"><svg width="48" height="48" viewBox="0 0 48 48"><use href="#chrome"/><circle cx="36" cy="36" r="12" fill="#bdd3df"/><path d="M25 40q0-6 6-6t6 14q-11 0-12-8z" fill="#7d2630"/><path d="M34 46q-1-16 6-17 7 0 8 9-2 9-14 8z" fill="#211b20"/><ellipse cx="31" cy="31" rx="4.500" ry="6" fill="#c98c70"/><path d="M26 29q0-6 5-6t5 6q-5-2-10 0z" fill="#28191a"/><ellipse cx="41" cy="35" rx="3.500" ry="4.500" fill="#d29a7d"/><path d="M27 30h8v2h-8zM37.500 33.500h7v2h-7z" fill="#191517"/><use href="#shortcut" y="35" width="13" height="13"/></svg></div><div class="tx wider">Antonio - Chrome<em>Atalho</em><em>2,33 KB</em></div></div>
      </div>
    </div>
    <div class="status"><span>34 itens</span><i></i><span>1 item selecionado</span><i></i></div>
  </section>
</div>
</body>
</html>
```
FILE: styles.css
```css
* { box-sizing: border-box; }
body { margin: 0; background: #fff; }
svg { display: block; flex: none; }
i, em { font-style: normal; }
.defs { position: absolute; }
.screen { position: relative; width: 1506px; height: 770px; overflow: hidden; background: #fff; font-family: Roboto, sans-serif; color: #5f6368; }

/* Drive */
.drive-head { display: flex; height: 54px; border-bottom: 1px solid #dadce0; }
.brand { display: flex; width: 256px; padding: 4px 0 0 22px; gap: 9px; }
.brand span { font: 22px/34px Lato, sans-serif; color: #5f6368; letter-spacing: -.5px; }
.drive-search { display: flex; align-items: center; flex: 1; height: 45px; padding: 0 0 3px 17px; gap: 16px; background: #f1f3f4; border-bottom-left-radius: 8px; }
.drive-search span { font: 16px/22px Lato, sans-serif; color: #757a7e; letter-spacing: .12px; }
.drive-body { display: flex; }
.side { width: 256px; padding-top: 13px; }
.new { display: flex; align-items: center; width: 120px; height: 48px; margin-left: 11px; padding: 0 0 0 16px; gap: 19px; border: 0; border-radius: 24px; background: #fff; box-shadow: 0 1px 2px rgba(60,64,67,.35), 0 1px 3px 1px rgba(60,64,67,.18); font: 14px/24px Lato, sans-serif; color: #3c4043; -webkit-text-stroke: .2px #3c4043; letter-spacing: .5px; }
.new span { padding-bottom: 3px; }
.side nav { padding-top: 12px; }
.row { display: flex; align-items: center; position: relative; height: 40px; padding-left: 27px; gap: 20px; font-size: 13px; font-weight: 500; letter-spacing: 0; }
.row span { padding-bottom: 2px; }
.caret { position: absolute; left: 14px; top: 15px; }
.rule { width: 240px; height: 1px; margin-top: 8px; background: #dadce0; }
.store { margin-top: 8px; }
.meter { width: 175px; height: 4px; margin: 8px 0 0 27px; border-radius: 2px; background: #e0e0e0; }
.used { margin: 8px 0 0 27px; font-size: 13px; line-height: 16px; letter-spacing: 0; }
.buy { display: block; width: 175px; height: 36px; margin: 12px 0 0 27px; padding: 0 0 4px 23px; border: 1px solid #dadce0; border-radius: 4px; background: #fff; text-align: left; font: 14px/17px Lato, sans-serif; color: #1a73e8; letter-spacing: .75px; }
.main { flex: 1; }
.crumbs { display: flex; align-items: center; height: 48px; padding-left: 10px; border-bottom: 1px solid #dadce0; font: 18px/24px Lato, sans-serif; }
.crumbs span { padding-bottom: 1px; }
.c1 { width: 98px; color: #55585c; letter-spacing: -.15px; }
.c2 { width: 102px; margin: 0 10px 0 16px; color: #36383c; letter-spacing: .25px; }
.empty { position: absolute; left: 676px; top: 224px; width: 432px; height: 432px; padding-top: 327px; border-radius: 50%; background: #f5f5f5; text-align: center; font-size: 13px; line-height: 18px; color: #80868b; }
.cloud { position: absolute; left: 764px; top: 621px; filter: drop-shadow(0 2px 4px rgba(0,0,0,.25)); }
.upload { position: absolute; left: 626px; top: 687px; width: 348px; height: 72px; padding-top: 10px; border-radius: 2px; background: #4285f4; box-shadow: 0 1px 5px rgba(0,0,0,.4); color: #fff; text-align: center; font-size: 14px; line-height: 20px; }
.upload p { margin: 0 0 10px; font-weight: 500; opacity: .88; letter-spacing: -.03px; }
.dest { display: flex; justify-content: center; align-items: center; gap: 10px; }
.toast { position: absolute; left: 24px; top: 703px; display: flex; align-items: center; width: 346px; height: 52px; padding: 2px 0 0 24px; border-radius: 2px; background: #323232; box-shadow: 0 1px 4px rgba(0,0,0,.35); color: #fff; font-size: 14px; }
.toast span { width: 195px; white-space: nowrap; }
.toast b { width: 86px; color: #8ab4f8; font-weight: 700; }
.ghost { position: absolute; left: 381px; top: 230px; width: 105px; height: 104px; padding: 3px 4px; border: 1px solid #d8eef8; border-radius: 3px; background: linear-gradient(#f1f9fd, #e1f2fc); box-shadow: 2px 2px 3px rgba(0,0,0,.35); }
.ghost svg { opacity: .8; }
.tip { position: absolute; left: 444px; top: 336px; display: flex; align-items: center; width: 62px; height: 20px; padding: 0 0 1px 4px; gap: 4px; border: 1px solid #767676; background: #fff; font: 12px "Open Sans", sans-serif; letter-spacing: -.2px; color: #1435c8; }

/* Explorer */
.win { position: absolute; left: 568px; top: 0; width: 938px; height: 562px; background: #fff; color: #000; font: 11.5px/16px "Open Sans", "Noto Sans", sans-serif; letter-spacing: -.25px; }
.title { display: flex; align-items: center; height: 24px; padding: 0 23px 7px 8px; }
.bar { width: 1px; height: 12px; background: #999; }
.b1 { margin: 0 9px 0 7px; }
.t3 { margin-left: 7px; }
.t4 { margin: 2px 8px 0 6px; }
.b2 { margin-right: 7px; }
.min { width: 10px; height: 1px; margin-left: auto; background: #000; }
.tabs { display: flex; height: 24px; border-bottom: 1px solid #dadbdc; line-height: 24px; color: #2b2b2b; }
.file { width: 56px; height: 23px; background: #0063b1; color: #fff; text-align: center; }
.on { width: 56px; height: 24px; background: #f5f6f7; border: solid #dadbdc; border-width: 1px 1px 0; line-height: 22px; text-align: center; }
.tb { margin-left: 15px; width: 96px; letter-spacing: -.3px; }
.ribbon { display: flex; height: 92px; border-bottom: 1px solid #dadbdc; background: #f5f6f7; color: #262626; }
.group { display: flex; flex-direction: column; height: 86px; margin-top: 2px; border-right: 1px solid #e2e3e4; }
.g1 { width: 281px; } .g2 { width: 202px; } .g3 { width: 148px; } .g4 { width: 156px; } .g5 { width: 118px; }
.tools { display: flex; flex: none; height: 70px; }
.g1 .tools { padding-left: 5px; } .g2 .tools { padding-left: 3px; } .g3 .tools { padding-left: 4px; } .g5 .tools { padding-left: 7px; }
.big { padding-top: 5px; text-align: center; line-height: 13px; white-space: nowrap; }
.big svg { margin: 0 auto 3px; }
.w76 { width: 76px; } .w44 { width: 44px; } .w41 { width: 41px; } .w42 { width: 42px; } .w58 { width: 58px; } .w40 { width: 40px; } .w79 { width: 79px; }
.w76 { padding-left: 1px; }
.off { color: #85888c; }
.off svg { opacity: .85; }
.smalls { padding-top: 2px; margin-left: 1px; }
.g1 .smalls { margin-left: 4px; }
.g3 .smalls { margin-left: 5px; }
.g5 .smalls { margin-left: 0; }
.smalls > div { display: flex; align-items: center; gap: 3px; height: 22px; white-space: nowrap; }
.dd { display: inline-block; width: 0; height: 0; border: solid transparent; border-width: 3px 3px 0; border-top-color: #222; vertical-align: 3px; }
.smalls .dd { margin-left: 0; }
.g4 .smalls .dd { margin-left: 2px; }
.vsep { width: 1px; height: 55px; margin: 7px 3px 0 5px; background: #dfe0e1; }
.cap { flex: none; padding-top: 1.5px; line-height: 16px; text-align: center; color: #5a5a5a; }
.g3 .cap { padding-right: 3px; }
.g5 .cap { padding-right: 1px; }
.addr { display: flex; height: 42px; padding-top: 5px; }
.box { display: flex; align-items: center; width: 552px; height: 30px; padding-left: 2px; gap: 4px; border: 1px solid #d9d9d9; }
.chev { margin-left: auto; margin-right: 5px; }
.reload { display: flex; justify-content: center; align-items: center; width: 30px; height: 28px; border-left: 1px solid #d9d9d9; }
.find { display: flex; align-items: center; flex: 1; height: 30px; margin-left: 12px; padding-left: 13px; gap: 13px; border: 1px solid #d9d9d9; border-right: 0; color: #6d6d6d; }
.content { display: flex; height: 356px; overflow: hidden; }
.tree { flex: none; width: 159px; padding-top: 8px; overflow: hidden; letter-spacing: -.1px; }
.n { display: flex; align-items: center; gap: 5px; height: 24px; white-space: nowrap; }
.n:has(svg[height="12"]) { letter-spacing: -.23px; }
.l0 { padding-left: 24px; background: #d9d9d9; }
.l1 { padding-left: 32px; } .l2 { padding-left: 40px; } .l3 { padding-left: 48px; }
.wide { letter-spacing: .1px; }
.snug { letter-spacing: -.2px; }
.scroll { display: flex; flex: none; flex-direction: column; align-items: center; width: 15px; margin: 0 1px; padding: 6px 0 5px; background: #f0f0f0; }
.scroll i { width: 15px; height: 107px; margin: 79px 0 auto; background: #cdcdcd; }
.files { display: grid; flex: none; grid-template-columns: repeat(3, 250px); grid-auto-rows: 52px; gap: 4px; height: 392px; margin: -36px 0 0 2px; padding-left: 15px; border-left: 1px solid #f2f2f2; }
.f { display: flex; gap: 5px; padding: 2px 0 0 4px; white-space: nowrap; letter-spacing: -.1px; }
.one .tx { padding-top: 7px; }
.two .tx { padding-top: 23px; }
.f em { display: block; color: #6d6d6d; letter-spacing: -.2px; }
.f .wide { letter-spacing: 0; }
.f .wider { letter-spacing: .12px; }
.f .tight { letter-spacing: -.28px; }
.sel { background: #cce8ff; box-shadow: inset 0 0 0 1px #99d1ff; }
.cap-bar { width: 189px; height: 13px; margin: 1px 0 1px -1px; border: 1px solid #bcbcbc; background: #e6e6e6; }
.cap-bar i { display: block; width: 16px; height: 11px; background: #26a0da; }
.status { display: flex; align-items: center; height: 24px; padding-left: 14px; color: #1e395b; letter-spacing: -.16px; }
.status i { width: 1px; height: 14px; margin: 0 10px; background: #e5e5e5; }
```
